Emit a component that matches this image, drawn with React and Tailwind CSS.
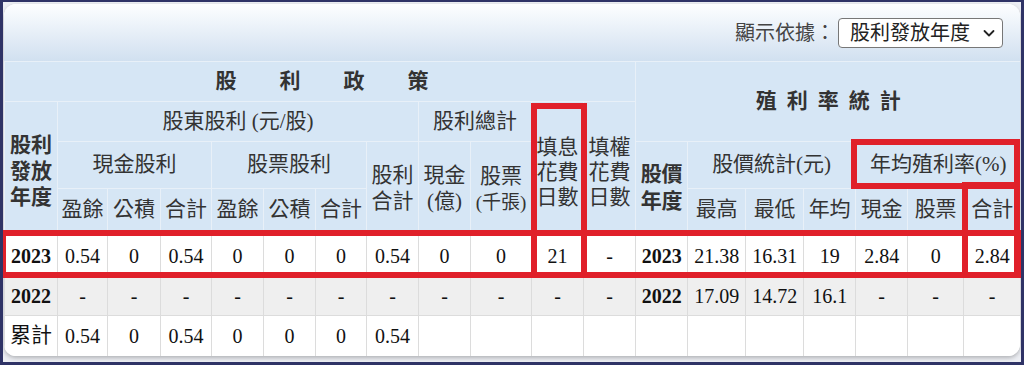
import React from 'react';

const cols = [53, 50, 53, 51, 52, 52, 51, 52, 52, 61, 52, 52, 52, 58, 58, 52, 52, 56, 57];

const thBase = 'border border-[#e8f0f8] bg-[#d6e6f5] text-[#333] text-[21px] text-center align-middle p-0';
const th = `${thBase} font-normal`;
const thBold = `${thBase} font-bold`;
const td = 'border border-[#dcdcdc] text-center align-middle p-0 text-[20px] text-[#111]';

const row2023 = ['0.54', '0', '0.54', '0', '0', '0', '0.54', '0', '0', '21', '-'];
const price2023 = ['21.38', '16.31', '19', '2.84', '0', '2.84'];
const row2022 = ['-', '-', '-', '-', '-', '-', '-', '-', '-', '-', '-'];
const price2022 = ['17.09', '14.72', '16.1', '-', '-', '-'];
const total = ['0.54', '0', '0.54', '0', '0', '0', '0.54', '', '', '', '', '', '', '', '', '', '', ''];

const Chevron = () => (
  <svg width="14" height="14" viewBox="0 0 14 14" fill="none">
    <path d="M2.5 5 L7 9.5 L11.5 5" stroke="#222" strokeWidth="1.8" strokeLinecap="round" strokeLinejoin="round" />
  </svg>
);

const App = () => {
  return (
    <div className="relative w-[1024px] h-[365px] overflow-hidden border-[3px] border-t-2 border-[#2f3366] bg-[#eceef3] pt-[2px] pl-px font-['Liberation_Serif','Noto_Sans_CJK_TC',serif]">
      {/* panel */}
      <div className="w-[1016px] h-[352px] rounded-[12px] overflow-hidden bg-white shadow-[0_2px_4px_rgba(0,0,0,0.25)]">
        <div className="h-[57px] flex items-center justify-end pr-[17px] bg-linear-to-b from-[#fdfeff] to-[#d1e0f0]">
          <span className="text-[20px] text-[#444] mr-[3px]">顯示依據：</span>
          <div className="w-[165px] h-[30px] flex items-center justify-between pl-[11px] pr-[6px] bg-white border border-[#777] rounded-[4px]">
            <span className="text-[20px] text-[#222] leading-none">股利發放年度</span>
            <Chevron />
          </div>
        </div>

        <table className="table-fixed border-collapse w-[1016px]">
          <colgroup>
            {cols.map((w, i) => (
              <col key={i} style={{ width: w }} />
            ))}
          </colgroup>
          <thead>
            <tr className="h-[40px]">
              <th colSpan={12} className={`${thBold} text-[20px]`}>
                <div className="flex justify-center gap-[43px] pl-[4px]">
                  <span>股</span>
                  <span>利</span>
                  <span>政</span>
                  <span>策</span>
                </div>
              </th>
              <th colSpan={7} rowSpan={2} className={`${thBold} text-[20px]`}>
                <span className="tracking-[10px] pl-[10px]">殖利率統計</span>
              </th>
            </tr>
            <tr className="h-[40px]">
              <th rowSpan={3} className={`${thBold} leading-[26px] pt-[10px]`}>
                股利
                <br />
                發放
                <br />
                年度
              </th>
              <th colSpan={7} className={th}>股東股利 (元/股)</th>
              <th colSpan={2} className={th}>股利總計</th>
              <th rowSpan={3} className={`${th} leading-[25px] pt-[12px]`}>
                填息
                <br />
                花費
                <br />
                日數
              </th>
              <th rowSpan={3} className={`${th} leading-[25px] pt-[12px]`}>
                填權
                <br />
                花費
                <br />
                日數
              </th>
            </tr>
            <tr className="h-[47px]">
              <th colSpan={3} className={th}>現金股利</th>
              <th colSpan={3} className={th}>股票股利</th>
              <th rowSpan={2} className={`${th} leading-[26px] pt-[4px]`}>
                股利
                <br />
                合計
              </th>
              <th rowSpan={2} className={`${th} leading-[26px] pt-[4px]`}>
                現金
                <br />
                (億)
              </th>
              <th rowSpan={2} className={`${th} leading-[26px] pt-[6px]`}>
                股票
                <br />
                <span className="text-[19px]">(千張)</span>
              </th>
              <th rowSpan={2} className={`${thBold} leading-[27px] pt-[4px]`}>
                股價
                <br />
                年度
              </th>
              <th colSpan={3} className={th}>股價統計(元)</th>
              <th colSpan={3} className={th}>年均殖利率(%)</th>
            </tr>
            <tr className="h-[42px]">
              {['盈餘', '公積', '合計', '盈餘', '公積', '合計'].map((t, i) => (
                <th key={i} className={th}>{t}</th>
              ))}
              {['最高', '最低', '年均', '現金', '股票', '合計'].map((t, i) => (
                <th key={i} className={th}>{t}</th>
              ))}
            </tr>
          </thead>
          <tbody>
            <tr className="h-[45px] bg-white">
              <td className={`${td} font-bold pt-[6px]`}>2023</td>
              {row2023.map((v, i) => (
                <td key={i} className={`${td} pt-[6px]`}>{v}</td>
              ))}
              <td className={`${td} font-bold pt-[6px]`}>2023</td>
              {price2023.map((v, i) => (
                <td key={i} className={`${td} pt-[6px]`}>{v}</td>
              ))}
            </tr>
            <tr className="h-[40px] bg-[#efefef]">
              <td className={`${td} font-bold`}>2022</td>
              {row2022.map((v, i) => (
                <td key={i} className={td}>{v}</td>
              ))}
              <td className={`${td} font-bold`}>2022</td>
              {price2022.map((v, i) => (
                <td key={i} className={td}>{v}</td>
              ))}
            </tr>
            <tr className="h-[41px] bg-white">
              <td className={`${td} text-[21px]`}>累計</td>
              {total.map((v, i) => (
                <td key={i} className={td}>{v}</td>
              ))}
            </tr>
          </tbody>
        </table>
      </div>

      {/* red annotation boxes */}
      <div className="pointer-events-none absolute left-[-3px] top-[228px] w-[1024px] h-[48px] border-[6px] border-[#e0202a]" />
      <div className="pointer-events-none absolute left-[528px] top-[101px] w-[56px] h-[175px] border-[6px] border-[#e0202a]" />
      <div className="pointer-events-none absolute left-[848px] top-[137px] w-[169px] h-[50px] border-[6px] border-[#e0202a]" />
      <div className="pointer-events-none absolute left-[959px] top-[180px] w-[58px] h-[96px] border-[6px] border-[#e0202a]" />
    </div>
  );
};

export default App;
